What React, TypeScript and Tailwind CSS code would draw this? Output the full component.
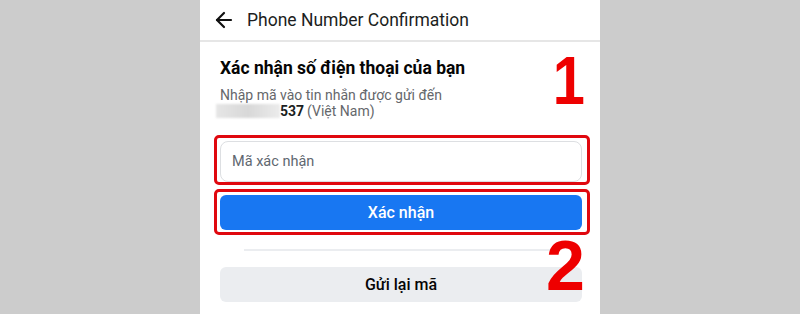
import { ArrowLeft } from "lucide-react"

export default function App() {
    return (
        <div className="w-[800px] h-[314px] bg-[#cccccc] flex justify-center overflow-hidden" style={{ fontFamily: "Roboto, 'Liberation Sans', sans-serif" }}>
            <div className="relative w-[400px] h-full bg-white">
                <div className="h-[42px] flex items-center border-b-2 border-[#e6e6e6] pl-[12px]">
                    <ArrowLeft size={24} strokeWidth={2.2} className="text-[#111]" />
                    <span className="ml-[11px] text-[17.5px] text-[#1c1e21]">Phone Number Confirmation</span>
                </div>
                <div className="pl-5 pr-[18px] pt-[14px]">
                    <h1 className="text-[17.5px] font-bold text-[#050505] leading-[24px]">Xác nhận số điện thoại của bạn</h1>
                    <p className="mt-[7px] text-[14px] leading-[16px] text-[#65676b]">Nhập mã vào tin nhắn được gửi đến</p>
                    <p className="text-[14px] leading-[16px] text-[#65676b] flex items-center">
                        <span className="inline-block w-[64px] h-[14px] -ml-[4px] bg-gradient-to-r from-[#e6e6e6] via-[#d8d8d8] to-[#ececec] blur-[1px]" />
                        <span className="font-bold text-[#1c1e21]">537</span>
                        <span className="ml-[3px]">(Việt Nam)</span>
                    </p>
                    <div className="mt-[16px] -ml-[6px] -mr-[8px] border-[3px] border-[#e0080f] rounded-[5px] pl-[3px] pr-[5px] pt-[3px]">
                        <div className="h-[41px] rounded-[8px] border border-[#dddfe2] flex items-center px-[11px] text-[14.5px] text-[#606770]">Mã xác nhận</div>
                    </div>
                    <div className="mt-[4px] -ml-[6px] -mr-[8px] border-[3px] border-[#e0080f] rounded-[5px] pl-[3px] pr-[5px] pt-[3px] pb-[2px]">
                        <div className="h-[35px] rounded-[6px] bg-[#1877f2] flex items-center justify-center text-[16px] font-medium text-white">Xác nhận</div>
                    </div>
                    <div className="mt-[14px] ml-[24px] mr-[27px] h-[2px] bg-[#ebedf0]" />
                    <div className="mt-[16px] h-[35px] rounded-[6px] bg-[#ebedf0] flex items-center justify-center text-[16px] font-medium text-[#050505]">Gửi lại mã</div>
                </div>
                <span className="absolute left-[350px] top-[44px] text-[68px] leading-[72px] font-bold text-[#ee0000] scale-x-[0.85]" style={{ fontFamily: "'Liberation Sans', Arial, sans-serif" }}>1</span>
                <span className="absolute left-[346px] top-[230px] text-[70px] leading-[72px] font-bold text-[#ee0000]" style={{ fontFamily: "'Liberation Sans', Arial, sans-serif" }}>2</span>
            </div>
        </div>
    )
}
